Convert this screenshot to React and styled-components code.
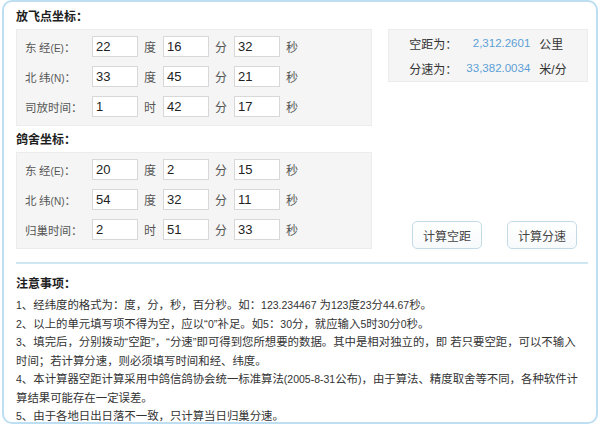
import React from "react";
import styled, { createGlobalStyle } from "styled-components";

const GlobalStyle = createGlobalStyle`
  html, body {
    margin: 0;
    padding: 0;
    background: #fff;
  }
  body {
    font-family: "Liberation Sans", "Noto Sans CJK SC", sans-serif;
    font-size: 12px;
    color: #333;
  }
`;

const groups = [
  {
    title: "放飞点坐标：",
    rows: [
      { label: "东 经", tag: "(E)", values: ["22", "16", "32"], units: ["度", "分", "秒"] },
      { label: "北 纬", tag: "(N)", values: ["33", "45", "21"], units: ["度", "分", "秒"] },
      { label: "司放时间", values: ["1", "42", "17"], units: ["时", "分", "秒"] },
    ],
  },
  {
    title: "鸽舍坐标：",
    rows: [
      { label: "东 经", tag: "(E)", values: ["20", "2", "15"], units: ["度", "分", "秒"] },
      { label: "北 纬", tag: "(N)", values: ["54", "32", "11"], units: ["度", "分", "秒"] },
      { label: "归巢时间", values: ["2", "51", "33"], units: ["时", "分", "秒"] },
    ],
  },
];

const results = [
  { label: "空距为：", value: "2,312.2601", unit: "公里" },
  { label: "分速为：", value: "33,382.0034", unit: "米/分" },
];

export default function App() {
  return (
    <>
      <GlobalStyle />
      <Card>
        <Top>
          <div>
            {groups.map((g) => (
              <div key={g.title}>
                <Title>{g.title}</Title>
                <Panel>
                  {g.rows.map((r) => (
                    <Row key={r.label}>
                      <Label>
                        {r.label}
                        {r.tag ? <Tag>{r.tag}</Tag> : null}：
                      </Label>
                      {r.values.map((v, i) => (
                        <React.Fragment key={i}>
                          <Field type="text" defaultValue={v} />
                          <Unit>{r.units[i]}</Unit>
                        </React.Fragment>
                      ))}
                    </Row>
                  ))}
                </Panel>
              </div>
            ))}
          </div>
          <Side>
            <ResultBox>
              {results.map((r) => (
                <React.Fragment key={r.label}>
                  <ResultLabel>{r.label}</ResultLabel>
                  <ResultValue>{r.value}</ResultValue>
                  <ResultUnit>{r.unit}</ResultUnit>
                </React.Fragment>
              ))}
            </ResultBox>
            <Buttons>
              <Button>计算空距</Button>
              <Button>计算分速</Button>
            </Buttons>
          </Side>
        </Top>
        <Divider />
        <Title as="h4">注意事项：</Title>
        <Notes>
          <li>
            <Num>1</Num>、经纬度的格式为：度，分，秒，百分秒。如：<Num>123.234467 </Num> 为<Num>123</Num>度<Num>23</Num>分<Num>44.67</Num>秒。
          </li>
          <li>
            <Num>2</Num>、以上的单元填写项不得为空，应以“<Num>0</Num>”补足。如<Num>5</Num>：<Num>30</Num>分，就应输入<Num>5</Num>时<Num>30</Num>分<Num>0</Num>秒。
          </li>
          <li>
            <Num>3</Num>、填完后，分别拨动“空距”，“分速”即可得到您所想要的数据。其中是相对独立的，即 若只要空距，可以不输入
          </li>
          <li>时间；若计算分速，则必须填写时间和经、纬度。</li>
          <li>
            <Num>4</Num>、本计算器空距计算采用中鸽信鸽协会统一标准算法<Num>(2005-8-31</Num>公布<Num>)</Num>，由于算法、精度取舍等不同，各种软件计
          </li>
          <li>算结果可能存在一定误差。</li>
          <li>
            <Num>5</Num>、由于各地日出日落不一致，只计算当日归巢分速。
          </li>
        </Notes>
      </Card>
    </>
  );
}

const Card = styled.div`
  box-sizing: border-box;
  margin: 0 2px;
  height: 424px;
  border: 2px solid #bddef3;
  border-radius: 10px;
  padding: 1px 8px 0 12px;
  overflow: hidden;
`;

const Top = styled.div`
  display: grid;
  grid-template-columns: 356px 200px;
  column-gap: 16px;
`;

const Title = styled.div`
  margin: 0;
  height: 26px;
  line-height: 26px;
  font-family: "Noto Sans CJK SC", sans-serif;
  font-size: 12px;
  font-weight: bold;
  color: #1e1e1e;
`;

const Panel = styled.div`
  box-sizing: border-box;
  height: 97px;
  background: #f5f5f5;
  border: 1px solid #ececec;
  padding: 6px 0 0 8px;
  display: flex;
  flex-direction: column;
  gap: 9px;
`;

const Row = styled.div`
  display: flex;
  align-items: center;
  height: 21px;
`;

const Label = styled.span`
  width: 67px;
  white-space: pre;
  font-family: "Noto Sans CJK SC", sans-serif;
  font-size: 11.5px;
  color: #555;
`;

const Tag = styled.span`
  font-family: "Liberation Sans", sans-serif;
  font-size: 10px;
`;

const Field = styled.input`
  box-sizing: border-box;
  width: 46px;
  height: 21px;
  margin: 0;
  padding: 0 3px;
  border: 1px solid #d8d8d8;
  background: #fff;
  font-family: "Liberation Sans", sans-serif;
  font-size: 13px;
  color: #222;
  outline: none;
`;

const Unit = styled.span`
  width: 12px;
  margin: 0 7px 0 6px;
  font-family: "Noto Sans CJK SC", sans-serif;
  color: #555;
`;

const Side = styled.div`
  display: flex;
  flex-direction: column;
  justify-content: space-between;
  padding-top: 26px;
`;

const ResultBox = styled.div`
  box-sizing: border-box;
  height: 53px;
  background: #f5f5f5;
  border: 1px solid #ececec;
  display: grid;
  grid-template-columns: auto auto auto;
  grid-auto-rows: 25px;
  justify-content: center;
  align-content: center;
  align-items: center;
  column-gap: 9px;
`;

const ResultLabel = styled.span`
  text-align: right;
  font-family: "Noto Sans CJK SC", sans-serif;
  color: #333;
`;

const ResultValue = styled.span`
  text-align: right;
  font-family: "Liberation Sans", sans-serif;
  font-size: 11.5px;
  color: #5c9fd6;
`;

const ResultUnit = styled.span`
  color: #333;
`;

const Buttons = styled.div`
  display: flex;
  gap: 25px;
  padding-left: 24px;
`;

const Button = styled.button`
  box-sizing: border-box;
  width: 70px;
  height: 28px;
  padding: 0;
  border: 1px solid #c3dbe6;
  border-radius: 5px;
  background: linear-gradient(#ffffff, #f7fafb);
  font-family: "Noto Sans CJK SC", sans-serif;
  font-size: 12px;
  color: #444;
  cursor: pointer;
`;

const Divider = styled.div`
  height: 2px;
  margin-top: 13px;
  margin-bottom: 6px;
  background: #cfe7f0;
`;

const Notes = styled.ul`
  margin: 0;
  padding: 0;
  list-style: none;
  font-size: 11.4px;
  line-height: 18.5px;
  color: #333;
  white-space: nowrap;
  li {
    margin: 0;
  }
`;

const Num = styled.span`
  font-family: "Liberation Sans", sans-serif;
  font-size: 10.5px;
`;
